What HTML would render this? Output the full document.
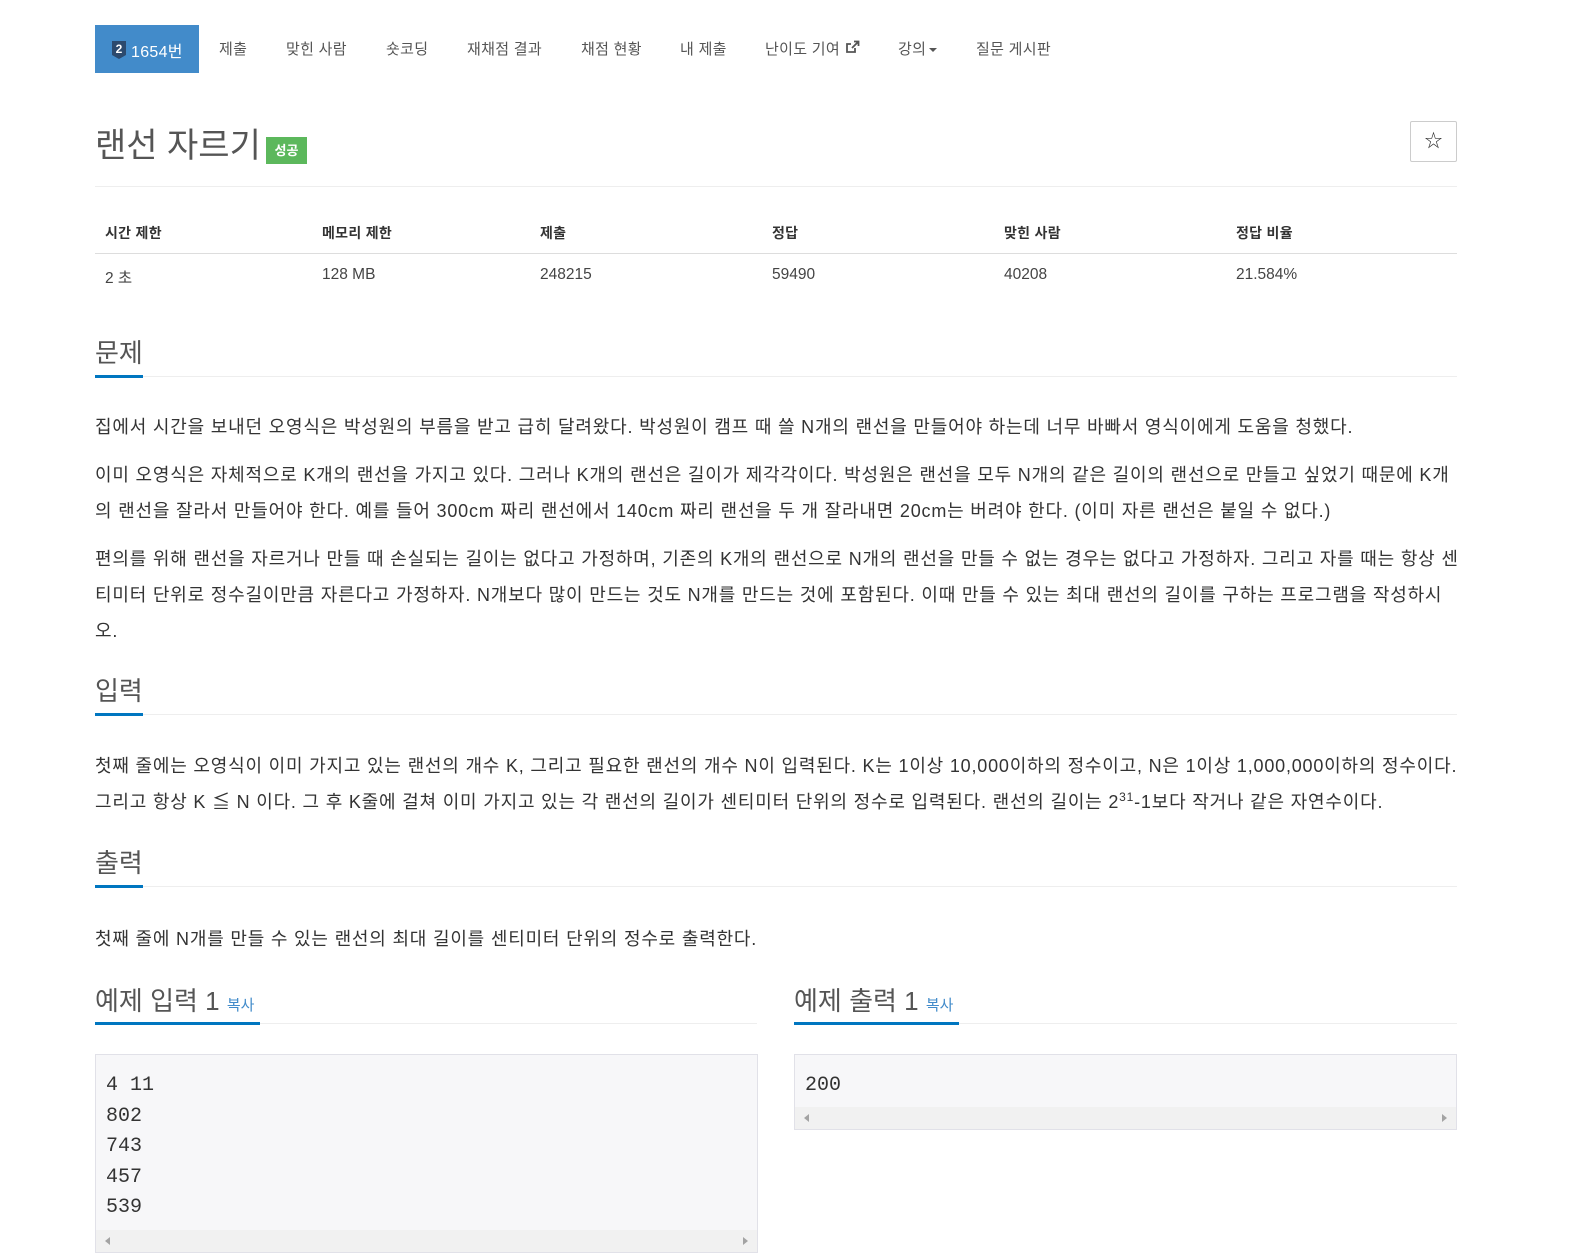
<!DOCTYPE html>
<html><head><meta charset="utf-8"><style>
*{box-sizing:border-box;margin:0;padding:0}
html,body{overflow:hidden}
body{width:1574px;height:1259px;background:#fff;font-family:"Liberation Sans","Noto Sans CJK KR",sans-serif;color:#333;position:relative}
.a{position:absolute;white-space:nowrap}
.nav{font-size:15px;color:#555;top:38px;letter-spacing:0.3px}
.sec{position:absolute;left:95px;width:1362px;height:1px;background:#eee}
.secu{position:absolute;height:3px;background:#0076c0}
.h{position:absolute;font-size:26px;color:#555;left:95px}
p.t{position:absolute;left:95px;width:1380px;font-size:18px;line-height:36px;color:#333;letter-spacing:0.8px}
sup{line-height:0;font-size:12px}
.th{font-size:14px;font-weight:bold;top:223px;letter-spacing:0.3px}
.td{font-size:15.5px;top:266px;color:#444}
pre{position:absolute;background:#f7f7f9;border:1px solid #e1e1e8;font-family:"Liberation Mono","DejaVu Sans Mono",monospace;font-size:20px;line-height:30.5px;padding:16px 10px 0;color:#333}
.sb{position:absolute;left:0;right:0;bottom:0;height:22px;background:#f1f1f1}
.sb:before{content:"";position:absolute;left:9px;top:7px;border:4px solid transparent;border-right:5px solid #a3a3a3;border-left:0}
.sb:after{content:"";position:absolute;right:9px;top:7px;border:4px solid transparent;border-left:5px solid #a3a3a3;border-right:0}
</style></head><body>
<div class="a" style="left:95px;top:25px;width:104px;height:48px;background:#428bca"></div>
<svg class="a" style="left:111px;top:40px" width="16" height="20" viewBox="0 0 16 20"><path d="M1 1h14v14l-7 4-7-4z" fill="#2c4a6e"/><text x="8" y="13" font-size="12" font-weight="bold" fill="#fff" text-anchor="middle" font-family="Liberation Sans">2</text></svg>
<div class="a nav" style="left:131px;color:#fff;font-size:16px">1654번</div>
<div class="a nav" style="left:219px">제출</div>
<div class="a nav" style="left:286px">맞힌 사람</div>
<div class="a nav" style="left:386px">숏코딩</div>
<div class="a nav" style="left:467px">재채점 결과</div>
<div class="a nav" style="left:581px">채점 현황</div>
<div class="a nav" style="left:680px">내 제출</div>
<div class="a nav" style="left:765px">난이도 기여</div>
<svg class="a" style="left:845px;top:40px" width="15" height="14" viewBox="0 0 15 14"><path d="M10 8v4H2V4h4" fill="none" stroke="#555" stroke-width="1.8"/><path d="M7 8l6-6M9 1.5h4.5V6" fill="none" stroke="#555" stroke-width="1.8"/></svg>
<div class="a nav" style="left:898px">강의</div>
<div class="a" style="left:929px;top:48px;border:4px solid transparent;border-top:4px solid #555;border-bottom:0"></div>
<div class="a nav" style="left:976px">질문 게시판</div>

<div class="a" style="left:95px;top:118px;font-size:34px;color:#555">랜선 자르기</div>
<div class="a" style="left:266px;top:137px;width:41px;height:27px;background:#5cb85c;color:#fff;font-size:13px;font-weight:bold;text-align:center;line-height:27px">성공</div>
<div class="a" style="left:1410px;top:121px;width:47px;height:41px;border:1px solid #ccc;border-radius:2px;text-align:center;line-height:38px;font-size:18px;color:#333">☆</div>
<div class="sec" style="top:186px"></div>

<div class="a th" style="left:105px">시간 제한</div>
<div class="a th" style="left:322px">메모리 제한</div>
<div class="a th" style="left:540px">제출</div>
<div class="a th" style="left:772px">정답</div>
<div class="a th" style="left:1004px">맞힌 사람</div>
<div class="a th" style="left:1236px">정답 비율</div>
<div class="sec" style="top:253px;background:#ddd"></div>
<div class="a td" style="left:105px">2 초</div>
<div class="a td" style="left:322px">128 MB</div>
<div class="a td" style="left:540px">248215</div>
<div class="a td" style="left:772px">59490</div>
<div class="a td" style="left:1004px">40208</div>
<div class="a td" style="left:1236px">21.584%</div>

<div class="h" style="top:333px">문제</div>
<div class="sec" style="top:376px"></div><div class="secu" style="left:95px;width:48px;top:375px"></div>
<p class="t" style="top:409px">집에서 시간을 보내던 오영식은 박성원의 부름을 받고 급히 달려왔다. 박성원이 캠프 때 쓸 N개의 랜선을 만들어야 하는데 너무 바빠서 영식이에게 도움을 청했다.</p>
<p class="t" style="top:457px">이미 오영식은 자체적으로 K개의 랜선을 가지고 있다. 그러나 K개의 랜선은 길이가 제각각이다. 박성원은 랜선을 모두 N개의 같은 길이의 랜선으로 만들고 싶었기 때문에 K개<br>의 랜선을 잘라서 만들어야 한다. 예를 들어 300cm 짜리 랜선에서 140cm 짜리 랜선을 두 개 잘라내면 20cm는 버려야 한다. (이미 자른 랜선은 붙일 수 없다.)</p>
<p class="t" style="top:541px">편의를 위해 랜선을 자르거나 만들 때 손실되는 길이는 없다고 가정하며, 기존의 K개의 랜선으로 N개의 랜선을 만들 수 없는 경우는 없다고 가정하자. 그리고 자를 때는 항상 센<br>티미터 단위로 정수길이만큼 자른다고 가정하자. N개보다 많이 만드는 것도 N개를 만드는 것에 포함된다. 이때 만들 수 있는 최대 랜선의 길이를 구하는 프로그램을 작성하시<br>오.</p>

<div class="h" style="top:671px">입력</div>
<div class="sec" style="top:714px"></div><div class="secu" style="left:95px;width:48px;top:713px"></div>
<p class="t" style="top:748px">첫째 줄에는 오영식이 이미 가지고 있는 랜선의 개수 K, 그리고 필요한 랜선의 개수 N이 입력된다. K는 1이상 10,000이하의 정수이고, N은 1이상 1,000,000이하의 정수이다.<br>그리고 항상 K ≦ N 이다. 그 후 K줄에 걸쳐 이미 가지고 있는 각 랜선의 길이가 센티미터 단위의 정수로 입력된다. 랜선의 길이는 2<sup>31</sup>-1보다 작거나 같은 자연수이다.</p>

<div class="h" style="top:843px">출력</div>
<div class="sec" style="top:886px"></div><div class="secu" style="left:95px;width:48px;top:885px"></div>
<p class="t" style="top:921px">첫째 줄에 N개를 만들 수 있는 랜선의 최대 길이를 센티미터 단위의 정수로 출력한다.</p>

<div class="h" style="top:981px">예제 입력 1 <span style="font-size:15px;color:#428bca">복사</span></div>
<div class="sec" style="top:1023px;width:662px"></div><div class="secu" style="left:95px;width:165px;top:1022px"></div>
<div class="h" style="top:981px;left:794px">예제 출력 1 <span style="font-size:15px;color:#428bca">복사</span></div>
<div class="sec" style="top:1023px;left:794px;width:663px"></div><div class="secu" style="left:794px;width:165px;top:1022px"></div>

<pre style="left:95px;top:1054px;width:663px;height:199px">4 11
802
743
457
539<div class="sb"></div></pre>
<pre style="left:794px;top:1054px;width:663px;height:76px">200<div class="sb"></div></pre>
</body></html>
